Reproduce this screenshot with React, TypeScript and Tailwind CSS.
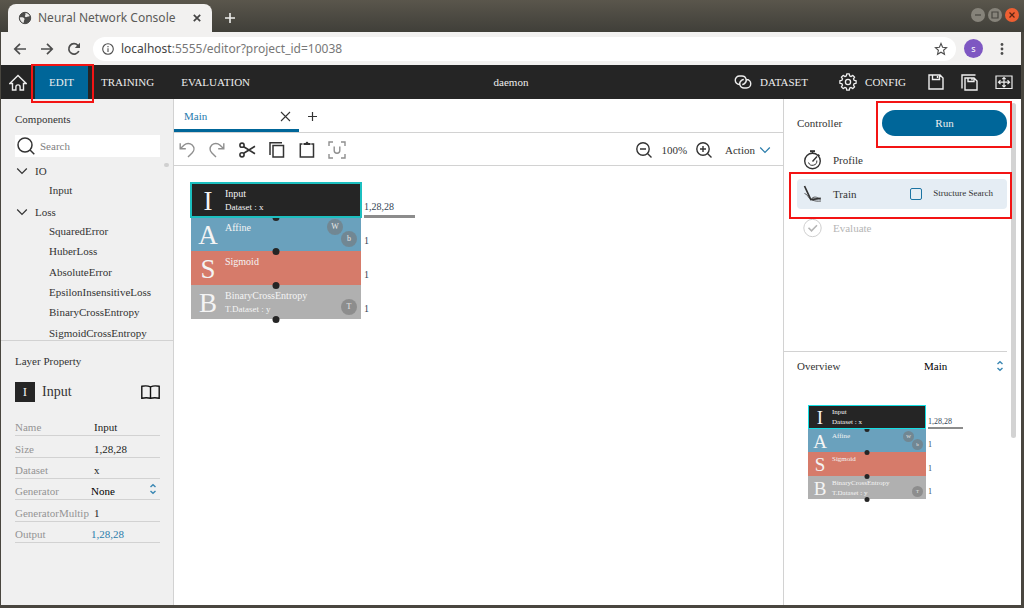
import type { ReactNode } from 'react';

const SERIF = "font-['Liberation_Serif',serif]";
const SANS = "font-['Noto_Sans',sans-serif]";

type IconProps = { className?: string; box?: string; width?: number; children: ReactNode };

function Icon({ className = 'size-5', box = '0 0 20 20', width = 1.4, children }: IconProps) {
  return (
    <svg className={`shrink-0 ${className}`} viewBox={box} fill="none" stroke="currentColor" strokeWidth={width} aria-hidden="true">
      {children}
    </svg>
  );
}

function UpDown({ className = '' }: { className?: string }) {
  return (
    <Icon className={`h-3 w-2 text-[#3a87b3] ${className}`} box="0 0 8 12" width={1.4}>
      <path d="M1.5 4 4 1.7 6.5 4M1.5 8 4 10.3 6.5 8" />
    </Icon>
  );
}

function Chevron({ className = '' }: { className?: string }) {
  return (
    <Icon className={`h-2 w-3 ${className}`} box="0 0 12 8" width={1.2}>
      <path d="M1.2 1.5 6 6.5l4.8-5" />
    </Icon>
  );
}

const gearOutline = Array.from({ length: 8 }, (_, tooth) =>
  [
    [-15, 6.3],
    [-9, 8.2],
    [9, 8.2],
    [15, 6.3],
  ].map(([offset, radius]) => {
    const angle = ((tooth * 45 + offset) * Math.PI) / 180;
    return `${(9 + radius * Math.cos(angle)).toFixed(2)},${(9 + radius * Math.sin(angle)).toFixed(2)}`;
  }).join(' '),
).join(' ');

function TitleBar() {
  return (
    <div className={`flex h-8 items-end bg-gradient-to-b from-[#5a564c] to-[#403f39] pl-2 ${SANS}`}>
      <div className="flex h-7 w-[204px] items-center rounded-t-lg bg-[#f2f1f0] pr-2.5 pl-2.5 text-[#5b5b58]">
        <Icon className="size-3.5" box="0 0 14 14" width={1}>
          <circle cx="7" cy="7" r="5.700" fill="#4a4a49" stroke="#4a4a49" />
          <path d="M1.800 6.500c2-.6 3.800-.2 4.600 1 .6 1-.6 1.700-.4 2.600L5.500 12C3.300 11.300 1.800 9 1.800 6.500ZM7.500 1.900c2 .1 3.500 1.300 4.200 3-1 .9-2.200.3-2.900 1.200-1.300.6-2.500-.6-1.600-1.800C8 3.500 7 2.800 7.500 1.900Z" fill="#e9e8e6" stroke="none" />
        </Icon>
        <span className="ml-1.5 flex-1 whitespace-nowrap text-[12px]">Neural Network Console</span>
        <button aria-label="Close tab" className="text-[#444]">
          <Icon className="size-2.5" box="0 0 10 10" width={1.7}>
            <path d="m1.800 1.800 6.400 6.400M8.200 1.800 1.800 8.200" />
          </Icon>
        </button>
      </div>
      <button aria-label="New tab" className="mb-2 ml-3 text-[#eeeeec]">
        <Icon className="size-3" box="0 0 12 12" width={1.6}>
          <path d="M6 1v10M1 6h10" />
        </Icon>
      </button>
      <div className="mr-[5px] mb-2.5 ml-auto flex gap-[3px]">
        <button aria-label="Minimize" className="grid size-3.5 place-items-center rounded-full bg-[#86837a] text-[#484640]">
          <Icon className="size-2" box="0 0 8 8" width={1.2}><path d="M1 4h6" /></Icon>
        </button>
        <button aria-label="Maximize" className="grid size-3.5 place-items-center rounded-full bg-[#86837a] text-[#484640]">
          <Icon className="size-2" box="0 0 8 8" width={1.2}><path d="M1 1h6v6H1z" /></Icon>
        </button>
        <button aria-label="Close" className="grid size-3.5 place-items-center rounded-full bg-[#ee5f32] text-[#5b2412]">
          <Icon className="size-2" box="0 0 8 8" width={1.2}><path d="m1.500 1.500 5 5M6.500 1.500l-5 5" /></Icon>
        </button>
      </div>
    </div>
  );
}

function AddressBar() {
  return (
    <div className={`flex h-[33px] items-center bg-[#f2f1f0] pr-3 pl-3 text-[#4d4d4d] ${SANS}`}>
      <button aria-label="Back" className="mr-[13px]">
        <Icon className="size-3.5" box="0 0 14 14" width={1.7}><path d="M13 7H2M7 1.800 1.800 7 7 12.200" /></Icon>
      </button>
      <button aria-label="Forward" className="mr-[13px]">
        <Icon className="size-3.5" box="0 0 14 14" width={1.7}><path d="M1 7h11M7 1.800 12.200 7 7 12.200" /></Icon>
      </button>
      <button aria-label="Reload" className="mr-3">
        <Icon className="size-3.5" box="0 0 14 14" width={1.7}>
          <path d="M11.800 9A5.200 5.200 0 1 1 10.800 3.300L12 5" />
          <path d="M13 .8V6H7.800z" fill="currentColor" stroke="none" />
        </Icon>
      </button>
      <div className="flex h-6 flex-1 items-center rounded-full bg-white px-2">
        <Icon className="size-3.5" box="0 0 14 14" width={1.1}>
          <circle cx="7" cy="7" r="5.300" />
          <path d="M7 6.200V10M7 4v1.200" />
        </Icon>
        <a href="#editor" className="ml-1.5 flex-1 text-[12px] whitespace-nowrap text-[#777]">
          <span className="text-[#444]">localhost</span>:5555/editor?project_id=10038
        </a>
        <button aria-label="Bookmark">
          <Icon className="size-3.5" box="0 0 14 14" width={1.1}>
            <path d="m7 1.500 1.600 3.700 4 .4-3 2.700.9 4L7 10.200l-3.500 2.100.9-4-3-2.700 4-.4Z" />
          </Icon>
        </button>
      </div>
      <button aria-label="Profile" className="ml-2 grid size-[19px] place-items-center rounded-full bg-[#7e57c2] text-[9px] text-white">s</button>
      <button aria-label="Browser menu" className="ml-3">
        <Icon className="size-3.5" box="0 0 14 14">
          <g fill="currentColor" stroke="none">
            <circle cx="7" cy="2.500" r="1.400" />
            <circle cx="7" cy="7" r="1.400" />
            <circle cx="7" cy="11.500" r="1.400" />
          </g>
        </Icon>
      </button>
    </div>
  );
}

function Header() {
  return (
    <header className="flex h-[34px] items-center bg-[#252525] pl-2 text-[11px] text-[#eee]">
      <nav className="flex h-full flex-1 items-center">
        <a href="#home" aria-label="Home" className="mt-0.5 grid w-[26px]">
          <Icon className="size-[18px]" box="0 0 18 18" width={1.400}>
            <path d="M.8 9.500 9 1.500l8.200 8h-2.700V16h-3.400v-3a2.100 2.100 0 0 0-4.200 0v3H3.500V9.500Z" />
          </Icon>
        </a>
        <div className="relative h-full">
          <a href="#edit" className="flex h-full w-[53px] items-center justify-center bg-[#006699]">EDIT</a>
          <span className="pointer-events-none absolute -top-px -right-1.5 -bottom-1 -left-1 z-10 border-2 border-[#f31414]" />
        </div>
        <a href="#training" className="ml-[13px]">TRAINING</a>
        <a href="#evaluation" className="ml-[27px]">EVALUATION</a>
      </nav>
      <span>daemon</span>
      <div className="mr-2 flex flex-1 items-center justify-end">
        <button className="flex items-center gap-2">
          <Icon className="h-3.5 w-[18px]" box="0 0 18 14" width={1.400}>
            <path d="M5.500 9.500a4.250 4.250 0 0 1 0-8.500H8a4.200 4.200 0 0 1 2.500 7.600c-.6.5-1.400.9-2.300.9M12.500 4.500a4.250 4.250 0 0 1 0 8.500H10a4.200 4.200 0 0 1-2.500-7.600c.6-.5 1.400-.9 2.300-.9" />
          </Icon>
          DATASET
        </button>
        <button className="ml-[31px] flex items-center gap-2">
          <Icon className="size-[18px]" box="0 0 18 18" width={1.300}>
            <circle cx="9" cy="9" r="2.600" />
            <polygon points={gearOutline} strokeLinejoin="round" />
          </Icon>
          CONFIG
        </button>
        <button aria-label="Save" className="ml-[22px]">
          <Icon className="size-4" box="0 0 16 16" width={1.400}>
            <path d="M1 1h11l3 3v11H1ZM4.500 1v4.500h7V1M9.500 2v2" />
          </Icon>
        </button>
        <button aria-label="Save as" className="ml-[17px]">
          <Icon className="size-[17px]" box="0 0 17 17" width={1.400}>
            <path d="M4 4h9l3 3v9H4ZM7 4v3.500h6V4M11 4.800v1.500M1 14.500V1h13.500" />
          </Icon>
        </button>
        <button aria-label="Fit to screen" className="ml-[17px]">
          <Icon className="h-4 w-[18px]" box="0 0 18 16" width={1.200}>
            <path d="M1 2h16v12.500H1ZM3.500 8.200h11M9 3.500V13M5.500 6.200l-2 2 2 2M12.500 6.200l2 2-2 2M7.300 5.200 9 3.500l1.700 1.700M7.300 11.300 9 13l1.700-1.700" />
          </Icon>
        </button>
      </div>
    </header>
  );
}

const groups = [
  { name: 'IO', items: ['Input'], list: 'h-5' },
  {
    name: 'Loss',
    items: ['SquaredError', 'HuberLoss', 'AbsoluteError', 'EpsilonInsensitiveLoss', 'BinaryCrossEntropy', 'SigmoidCrossEntropy'],
    list: 'h-[122px]',
  },
];

const properties = [
  { name: 'Name', value: 'Input' },
  { name: 'Size', value: '1,28,28' },
  { name: 'Dataset', value: 'x' },
  { name: 'Generator', value: 'None' },
  { name: 'GeneratorMultip', value: '1' },
  { name: 'Output', value: '1,28,28' },
];

function PropertyValue({ name, value }: { name: string; value: string }) {
  if (name === 'Generator') {
    return (
      <span className="relative flex flex-1 items-center">
        <select id={name} className="w-full appearance-none bg-transparent pl-0.5 text-black" defaultValue={value}>
          <option>{value}</option>
        </select>
        <UpDown className="pointer-events-none absolute right-[3px] bottom-1" />
      </span>
    );
  }
  if (name === 'Output') {
    return <output id={name} className="pl-0.5 text-[#2a7cab]">{value}</output>;
  }
  return <input id={name} defaultValue={value} className="w-0 flex-1 pl-[5px] text-[#222] outline-none" />;
}

function Sidebar() {
  return (
    <aside className="flex w-[173px] shrink-0 flex-col border-r border-[#d2d2d2] bg-[#f0f0f0] text-[11px] leading-4 text-[#333]">
      <section className="relative h-[242px] overflow-hidden border-b border-[#d2d2d2] pt-3 pr-[13px] pl-3.5">
        <h2>Components</h2>
        <div className="mt-2 mb-1 flex h-[22px] items-center bg-white pl-0.5">
          <Icon className="size-[18px]" box="0 0 18 18" width={1.500}>
            <circle cx="8" cy="8" r="7" />
            <path d="m13 13 4.300 4.300" />
          </Icon>
          <input aria-label="Search components" placeholder="Search" className="ml-[5px] w-0 flex-1 outline-none placeholder:text-[#808080]" />
        </div>
        {groups.map((group) => (
          <div key={group.name} className="mb-0.5">
            <button className="flex h-[19px] items-center gap-[7px] pl-px">
              <Chevron />
              {group.name}
            </button>
            <ul className={`grid auto-rows-fr items-center pl-[34px] ${group.list}`}>
              {group.items.map((item) => <li key={item}>{item}</li>)}
            </ul>
          </div>
        ))}
        <span className="absolute top-16 right-1 h-1 w-[5px] rounded-full bg-[#d0d0d0]" />
      </section>
      <section className="pt-3 pr-[13px] pl-3.5">
        <h2>Layer Property</h2>
        <div className="mt-[13px] flex items-center">
          <span className="grid size-5 place-items-center bg-[#252525] text-[13px] text-[#eee]">I</span>
          <span className="ml-[7px] flex-1 text-[14px]">Input</span>
          <button aria-label="Reference" className="text-[#111]">
            <Icon className="h-3.5 w-[19px]" box="0 0 19 14" width={1.400}>
              <path d="M9.500 1.800C7 .7 3.500.7.800 1.300v11.900c2.700-.6 6.200-.6 8.700 0 2.500-.6 6-.6 8.700 0V1.300C15.500.7 12 .7 9.500 1.800Zm0 0v11.400" />
            </Icon>
          </button>
        </div>
        <div className="mt-[13px] grid h-32 auto-rows-fr">
          {properties.map((property) => (
            <div key={property.name} className="flex items-end border-b border-[#d2d2d2]">
              <label htmlFor={property.name} className="w-[74px] whitespace-nowrap text-[#949494]">{property.name}</label>
              <PropertyValue name={property.name} value={property.value} />
            </div>
          ))}
        </div>
      </section>
    </aside>
  );
}

type Layer = { letter: string; name: string; detail?: string; color: string; shape: string; params: string[]; bar?: boolean };

const layers: Layer[] = [
  { letter: 'I', name: 'Input', detail: 'Dataset : x', color: 'bg-[#252525]', shape: '1,28,28', params: [], bar: true },
  { letter: 'A', name: 'Affine', color: 'bg-[#6aa1bd]', shape: '1', params: ['W', 'b'] },
  { letter: 'S', name: 'Sigmoid', color: 'bg-[#d67b6a]', shape: '1', params: [] },
  { letter: 'B', name: 'BinaryCrossEntropy', detail: 'T.Dataset : y', color: 'bg-[#b0b0b0]', shape: '1', params: ['T'] },
];

const large = {
  root: 'h-[136px] w-[170px]',
  letter: 'w-[34px] pt-[3px] text-[27px]',
  text: 'pt-[3px] text-[10px] leading-[15px]',
  detail: 'text-[9px] leading-3',
  dot: 'size-[7px] -bottom-1',
  badge: 'size-4 text-[8px]',
  first: 'top-0.5 right-[18px]',
  last: 'bottom-1 right-1',
  shape: 'bottom-0.5 ml-[3px] text-[10px] leading-4',
  bar: 'h-[3px] w-[51px]',
  ring: 'border-2 border-[#1cbfc0] -inset-px',
};

const small: typeof large = {
  root: 'h-[94px] w-[118px]',
  letter: 'w-6 pt-0.5 text-[19px]',
  text: 'pt-0.5 text-[7px] leading-[11px]',
  detail: 'text-[7px] leading-[8px]',
  dot: 'size-[5px] -bottom-[3px]',
  badge: 'size-[11px] text-[5px]',
  first: 'top-0.5 right-3',
  last: 'bottom-0.5 right-[3px]',
  shape: 'bottom-0.5 ml-0.5 text-[8px] leading-[11px]',
  bar: 'h-0.5 w-[35px]',
  ring: 'border border-[#14dfe4] inset-0',
};

function Network({ scale }: { scale: typeof large }) {
  return (
    <div className={`grid grid-rows-4 ${scale.root}`}>
      {layers.map((layer, index) => (
        <div key={layer.letter} className={`relative flex text-[#f4f4f4] ${layer.color}`}>
          <span className={`grid place-items-center leading-none ${scale.letter}`}>{layer.letter}</span>
          <div className={scale.text}>
            <div>{layer.name}</div>
            {layer.detail && <div className={scale.detail}>{layer.detail}</div>}
          </div>
          {layer.params.map((param, i) => (
            <span
              key={param}
              className={`absolute grid place-items-center rounded-full bg-[#777]/60 leading-none text-[#e8e8e8] ${scale.badge} ${i === layer.params.length - 1 ? scale.last : scale.first}`}
            >
              {param}
            </span>
          ))}
          <span className={`absolute left-1/2 z-10 -translate-x-1/2 rounded-full bg-[#252525] ${scale.dot}`} />
          {index === 0 && <span className={`absolute z-10 ${scale.ring}`} />}
          <span className={`absolute left-full whitespace-nowrap text-[#345] ${scale.shape}`}>
            {layer.shape}
            {layer.bar && <span className={`absolute top-full left-0 bg-[#8c8c8c] ${scale.bar}`} />}
          </span>
        </div>
      ))}
    </div>
  );
}

function Editor() {
  return (
    <main className="flex min-w-0 flex-1 flex-col bg-white text-[11px] text-[#333]">
      <div className="flex h-[34px] border-b border-[#d2d2d2]">
        <div className="flex h-[33px] w-[125px] items-center border-b-3 border-[#006699] pt-1 pr-2 pl-2.5">
          <button className="flex-1 text-left text-[#1f7bad]">Main</button>
          <button aria-label="Close Main">
            <Icon className="size-[11px]" box="0 0 11 11" width={1.100}><path d="m1 1 9 9M10 1l-9 9" /></Icon>
          </button>
        </div>
        <button aria-label="Add tab" className="mt-0.5 ml-2">
          <Icon className="size-[11px]" box="0 0 11 11" width={1.200}><path d="M5.500 1v9M1 5.500h9" /></Icon>
        </button>
      </div>
      <div className="flex h-[33px] items-center justify-between border-b border-[#d2d2d2] pt-0.5 pr-3 pl-[3px]">
        <div className="flex gap-2.5">
          <button aria-label="Undo" className="text-[#8f8f8f]">
            <Icon><path d="M3.200 3.200v5.600h5.600M3.200 8.800 7.200 5C9.500 2.900 13 3 15.200 5c2.400 2.400 2.200 5.600.1 7.700L11 17" /></Icon>
          </button>
          <button aria-label="Redo" className="text-[#8f8f8f]">
            <Icon><path d="M16.800 3.200v5.600h-5.600M16.800 8.800l-4-3.800C10.500 2.900 7 3 4.800 5c-2.400 2.400-2.200 5.600-.1 7.700L9 17" /></Icon>
          </button>
          <button aria-label="Cut">
            <Icon width={1.600}>
              <circle cx="5" cy="5.200" r="2.100" />
              <circle cx="5" cy="14.800" r="2.100" />
              <path d="m6.700 6.700 11.300 7M6.700 13.300 18 6.300" />
            </Icon>
          </button>
          <button aria-label="Copy">
            <Icon width={1.500}><path d="M6 5.500h10.500V17H6ZM3 15V2.700h12" /></Icon>
          </button>
          <button aria-label="Paste">
            <Icon width={1.500}>
              <path d="M5.500 4H3.300v13h13.200V4h-2.200" />
              <path d="M6.500 5V3h2l1-1.200h1L11.500 3h2v2Z" fill="currentColor" stroke="none" />
            </Icon>
          </button>
          <button aria-label="Unit" className="text-[#8f8f8f]">
            <Icon><path d="M2 6V2h4M14 2h4v4M18 14v4h-4M6 18H2v-4M7.200 6.500v4a2.800 2.800 0 0 0 5.600 0v-4" /></Icon>
          </button>
        </div>
        <div className="flex items-center">
          <button aria-label="Zoom out">
            <Icon className="size-4" box="0 0 16 16"><circle cx="7" cy="7" r="6.200" /><path d="m11.500 11.500 4 4M4 7h6" /></Icon>
          </button>
          <span className="mx-[9px]">100%</span>
          <button aria-label="Zoom in">
            <Icon className="size-4" box="0 0 16 16"><circle cx="7" cy="7" r="6.200" /><path d="m11.500 11.500 4 4M4 7h6M7 4v6" /></Icon>
          </button>
          <button className="ml-[13px] flex items-center gap-1">
            Action
            <Chevron className="text-[#2a7cab]" />
          </button>
        </div>
      </div>
      <div className="flex-1 pt-[17px] pl-[17px]">
        <Network scale={large} />
      </div>
    </main>
  );
}

function Controller() {
  return (
    <aside className="relative w-[238px] shrink-0 border-l border-[#d2d2d2] bg-white pr-3.5 text-[11px] text-[#333]">
      <section className="h-[253px] border-b border-[#d2d2d2] pt-[11px] pl-[13px]">
        <div className="flex items-center justify-between">
          <h2>Controller</h2>
          <div className="relative">
            <button className="h-[26px] w-[125px] rounded-full bg-[#006699] text-[#eee]">Run</button>
            <span className="pointer-events-none absolute -top-[9px] -right-[5px] -bottom-3 -left-1.5 z-10 border-2 border-[#f31414]" />
          </div>
        </div>
        <div className="mt-[9px] grid gap-1">
          <button className="flex h-[30px] items-center gap-2.5 pl-1.5">
            <Icon className="size-5">
              <circle cx="9.500" cy="11" r="7.800" />
              <path d="M7 1.200h5" strokeWidth="2" />
              <path d="M9.500 1.200V3M15 4.500l1.500 1.500M9.500 11.500l4.500-5" />
              <path d="M13.800 10.500a4.300 4.300 0 0 1-8.300 2" strokeWidth="1" />
            </Icon>
            Profile
          </button>
          <div className="relative flex h-[30px] items-center rounded bg-[#e5edf4] pr-3.5 pl-1.5">
            <button className="flex flex-1 items-center gap-2.5">
              <Icon className="size-5">
                <path d="m1.500 2 6.300 13.500 10-1.200" strokeWidth="1.700" />
                <path d="M1.500 9.500c3 .3 3.500 4.500 6.500 6 2.500-3.500 5.500-3 9.500 0M9 16c3 1 5 1.500 9 1" strokeWidth=".8" />
              </Icon>
              Train
            </button>
            <label className="flex items-center gap-[11px] text-[9px]">
              <input type="checkbox" className="size-3 appearance-none rounded-[2px] border border-[#1c74a3]" />
              Structure Search
            </label>
            <span className="pointer-events-none absolute -top-[7px] -right-[5px] -bottom-2.5 -left-2 z-10 border-2 border-[#f31414]" />
          </div>
          <button disabled className="flex h-[30px] items-center gap-2.5 pl-1.5 text-[#b5b5b5]">
            <Icon className="size-5" width={1}>
              <circle cx="9.500" cy="10" r="8.700" className="text-[#cfcfcf]" stroke="currentColor" />
              <path d="m5.500 9.800 3 3 5.500-5.500" strokeWidth="1.600" />
            </Icon>
            Evaluate
          </button>
        </div>
      </section>
      <section className="pl-[13px]">
        <div className="flex h-7 items-center">
          <label htmlFor="overview" className="flex-1">Overview</label>
          <div className="relative flex w-[83px] items-center">
            <select id="overview" className="w-full appearance-none bg-transparent text-black" defaultValue="Main">
              <option>Main</option>
            </select>
            <UpDown className="pointer-events-none absolute right-[3px]" />
          </div>
        </div>
        <div className="mt-[25px] ml-[11px]">
          <Network scale={small} />
        </div>
      </section>
      <span className="absolute top-1 right-[5px] h-[335px] w-[5px] rounded-full bg-[#d3d3d3]" />
    </aside>
  );
}

export default function App() {
  return (
    <div className="flex min-h-screen flex-col bg-[#49463f]">
      <TitleBar />
      <div className="mr-[3px] mb-[3px] ml-px flex flex-1 flex-col">
        <AddressBar />
        <div className={`flex flex-1 flex-col ${SERIF}`}>
          <Header />
          <div className="flex flex-1">
            <Sidebar />
            <Editor />
            <Controller />
          </div>
        </div>
      </div>
    </div>
  );
}
